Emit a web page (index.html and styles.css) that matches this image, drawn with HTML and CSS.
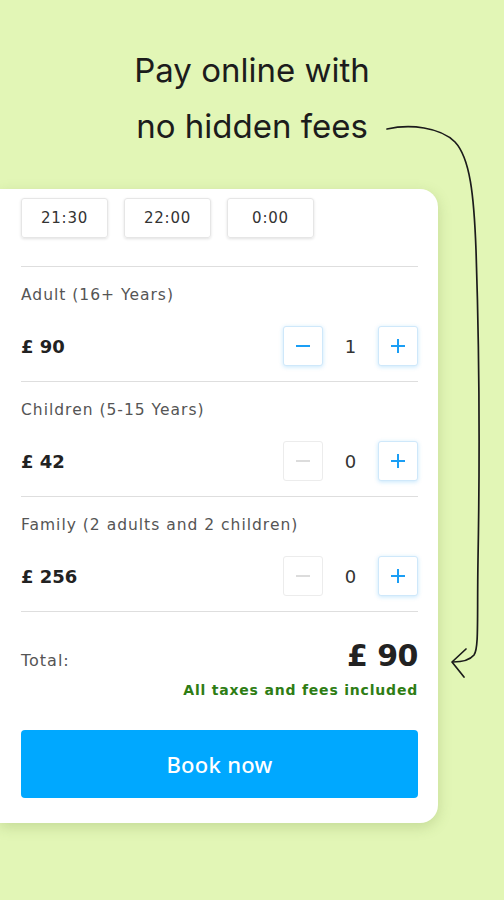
FILE: index.html
```html
<!DOCTYPE html>
<html>
<head>
<meta charset="utf-8">
<link rel="stylesheet" href="styles.css">
</head>
<body>
<div class="page">
  <h1 class="headline">Pay online with<br>no hidden fees</h1>
  <div class="card">
    <div class="times">
      <div class="chip">21:30</div>
      <div class="chip">22:00</div>
      <div class="chip">0:00</div>
    </div>
    <div class="ticket">
      <div class="label">Adult (16+ Years)</div>
      <div class="row">
        <div class="price">£ 90</div>
        <div class="stepper">
          <button class="step active"><svg width="18" height="18" viewBox="0 0 18 18"><path d="M2 9h14" stroke="#1a9ef5" stroke-width="2"/></svg></button>
          <span class="qty">1</span>
          <button class="step active"><svg width="18" height="18" viewBox="0 0 18 18"><path d="M2 9h14M9 2v14" stroke="#1a9ef5" stroke-width="2"/></svg></button>
        </div>
      </div>
    </div>
    <div class="ticket">
      <div class="label">Children (5-15 Years)</div>
      <div class="row">
        <div class="price">£ 42</div>
        <div class="stepper">
          <button class="step disabled"><svg width="18" height="18" viewBox="0 0 18 18"><path d="M2 9h14" stroke="#dcdcdc" stroke-width="2"/></svg></button>
          <span class="qty">0</span>
          <button class="step active"><svg width="18" height="18" viewBox="0 0 18 18"><path d="M2 9h14M9 2v14" stroke="#1a9ef5" stroke-width="2"/></svg></button>
        </div>
      </div>
    </div>
    <div class="ticket">
      <div class="label">Family (2 adults and 2 children)</div>
      <div class="row">
        <div class="price">£ 256</div>
        <div class="stepper">
          <button class="step disabled"><svg width="18" height="18" viewBox="0 0 18 18"><path d="M2 9h14" stroke="#dcdcdc" stroke-width="2"/></svg></button>
          <span class="qty">0</span>
          <button class="step active"><svg width="18" height="18" viewBox="0 0 18 18"><path d="M2 9h14M9 2v14" stroke="#1a9ef5" stroke-width="2"/></svg></button>
        </div>
      </div>
    </div>
    <div class="total">
      <div class="total-row">
        <span class="total-label">Total:</span>
        <span class="total-price">£ 90</span>
      </div>
      <div class="fees">All taxes and fees included</div>
    </div>
    <button class="book">Book now</button>
  </div>
  <svg class="arrow" width="504" height="900" viewBox="0 0 504 900">
    <path d="M387 129 C410 124 440 127 455 142 C470 158 474 195 476 250 C479 340 480 450 478 560 C477 620 479 648 474 655 C469 661 461 662 453 662" fill="none" stroke="#1b1b1b" stroke-width="1.7" stroke-linecap="round"/>
    <path d="M466 649 L452 662 L464 677" fill="none" stroke="#1b1b1b" stroke-width="1.7" stroke-linecap="round" stroke-linejoin="round"/>
  </svg>
</div>
</body>
</html>
```

FILE: styles.css
```css
* { box-sizing: border-box; }
html, body {
  margin: 0;
  padding: 0;
  background: #e2f6b6;
}
.page {
  position: relative;
  width: 504px;
  height: 900px;
  overflow: hidden;
}
.headline {
  margin: 42px 0 0 0;
  font-family: Inter, "Noto Sans", sans-serif;
  font-weight: 400;
  font-size: 33px;
  line-height: 56px;
  color: #1c1c1c;
  text-align: center;
}
.card {
  margin-top: 35px;
  width: 438px;
  background: #fff;
  border-radius: 0 18px 18px 0;
  box-shadow: 0 4px 14px rgba(90, 120, 40, 0.22);
  padding: 9px 20px 25px 21px;
  font-family: "DejaVu Sans", "Noto Sans", sans-serif;
}
.times {
  display: flex;
  gap: 16px;
  padding-bottom: 28px;
  border-bottom: 1px solid #dedede;
}
.chip {
  width: 87px;
  height: 40px;
  border: 1px solid #e6e6e6;
  border-radius: 3px;
  box-shadow: 0 1px 3px rgba(0,0,0,0.12);
  display: flex;
  align-items: center;
  justify-content: center;
  font-size: 15px;
  letter-spacing: 0.8px;
  color: #333;
}
.ticket {
  padding: 18px 0 15px;
  border-bottom: 1px solid #dedede;
}
.label {
  font-size: 15.5px;
  line-height: 20px;
  letter-spacing: 1px;
  color: #555;
}
.row {
  margin-top: 21px;
  display: flex;
  align-items: center;
  justify-content: space-between;
  height: 40px;
}
.price {
  font-size: 18px;
  font-weight: 700;
  color: #222;
}
.stepper {
  display: flex;
  align-items: center;
}
.step {
  width: 40px;
  height: 40px;
  border-radius: 3px;
  background: #fff;
  display: flex;
  align-items: center;
  justify-content: center;
  padding: 0;
}
.step.active {
  border: 1px solid #cfe8fa;
  box-shadow: 0 1px 4px rgba(26,158,245,0.25);
}
.step.disabled {
  border: 1px solid #ececec;
}
.qty {
  width: 55px;
  text-align: center;
  font-size: 18px;
  color: #333;
}
.total {
  padding-top: 24px;
}
.total-row {
  display: flex;
  justify-content: space-between;
  align-items: baseline;
}
.total-label {
  font-size: 16px;
  letter-spacing: 1px;
  color: #555;
}
.total-price {
  font-size: 30px;
  line-height: 40px;
  font-weight: 700;
  letter-spacing: -0.5px;
  color: #222;
}
.fees {
  text-align: right;
  font-size: 14px;
  line-height: 20px;
  font-weight: 700;
  letter-spacing: 0.8px;
  color: #2e7d14;
  margin-top: 4px;
}
.book {
  margin-top: 30px;
  width: 100%;
  height: 68px;
  border: none;
  border-radius: 4px;
  background: #00a8ff;
  color: #fff;
  font-family: "Noto Sans", "Open Sans", sans-serif;
  font-size: 22px;
  font-weight: 500;
  letter-spacing: 0.3px;
}
.arrow {
  position: absolute;
  left: 0;
  top: 0;
  pointer-events: none;
}
```
